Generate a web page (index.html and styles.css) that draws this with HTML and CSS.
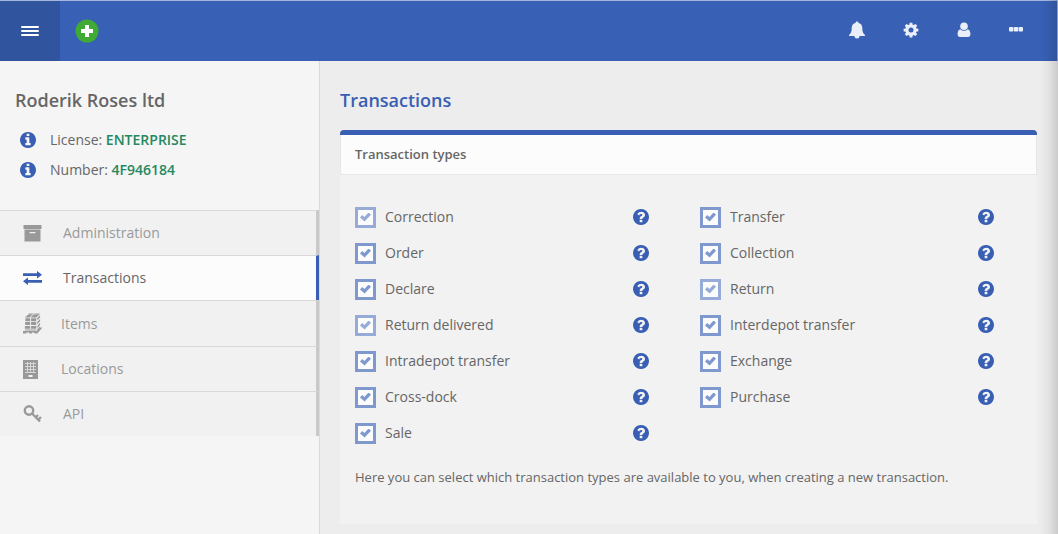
FILE: index.html
```html
<!DOCTYPE html>
<html lang="en">
<head>
<meta charset="utf-8">
<meta name="viewport" content="width=device-width, initial-scale=1">
<title>Transactions</title>
<link rel="stylesheet" href="styles.css">
</head>
<body>
<svg class="sprite" aria-hidden="true">
  <symbol id="help" viewBox="128 128 1536 1536"><path d="M1024 1376v-192q0-14-9-23t-23-9h-192q-14 0-23 9t-9 23v192q0 14 9 23t23 9h192q14 0 23-9t9-23zm256-672q0-88-55.5-163t-138.500-116-170-41q-243 0-371 213-15 24 8 42l132 100q7 6 19 6 16 0 25-12 53-68 86-92 34-24 86-24 48 0 85.500 26t37.500 59q0 38-20 61t-68 45q-63 28-115.500 86.500t-52.500 125.500v36q0 14 9 23t23 9h192q14 0 23-9t9-23q0-19 21.500-49.500t54.500-49.500q32-18 49-28.500t46-35 44.500-48 28-60.500 12.500-81zm384 192q0 209-103 385.500t-279.500 279.500-385.500 103-385.500-103-279.500-279.500-103-385.500 103-385.500 279.500-279.500 385.500-103 385.500 103 279.500 279.500 103 385.500z"/></symbol>
  <symbol id="info" viewBox="128 128 1536 1536"><path d="M1152 1376v-160q0-14-9-23t-23-9h-96v-512q0-14-9-23t-23-9h-320q-14 0-23 9t-9 23v160q0 14 9 23t23 9h96v320h-96q-14 0-23 9t-9 23v160q0 14 9 23t23 9h448q14 0 23-9t9-23zm-128-896v-160q0-14-9-23t-23-9h-192q-14 0-23 9t-9 23v160q0 14 9 23t23 9h192q14 0 23-9t9-23zm640 416q0 209-103 385.500t-279.500 279.500-385.500 103-385.500-103-279.500-279.500-103-385.500 103-385.500 279.500-279.500 385.500-103 385.500 103 279.500 279.500 103 385.500z"/></symbol>
</svg>

<header class="topbar">
  <button class="menu-button" aria-label="Menu"><svg width="18" height="12" viewBox="0 0 18 12"><path d="M1 2h16M1 6h16M1 10h16" stroke="#fff" stroke-width="2" stroke-linecap="round"/></svg></button>
  <button class="add-button" aria-label="Add"><svg width="24" height="24" viewBox="0 0 24 24"><circle cx="12" cy="12" r="11.500" fill="#3fab35"/><path d="M12 6v12M6 12h12" stroke="#fff" stroke-width="4"/></svg></button>
  <nav class="tools" aria-label="Tools">
    <button class="tool" aria-label="Notifications"><svg width="16" height="18" viewBox="0 0 16 18"><path d="M8 .5c.8 0 1.300.5 1.300 1.200 2.500.6 4 2.600 4 5.300 0 3.700.8 5.300 2.700 7v1H10.500a2.500 2.500 0 0 1-5 0H0v-1c1.900-1.700 2.700-3.300 2.700-7 0-2.700 1.500-4.700 4-5.300C6.700 1 7.200.5 8 .5z"/></svg></button>
    <button class="tool" aria-label="Settings"><svg width="16" height="16" viewBox="0 0 16 16"><path fill-rule="evenodd" d="M6.700.7h2.600l.4 2 .9.4 1.800-1.200 1.800 1.800L13 5.500l.4.900 2 .3v2.600l-2 .4-.4.900 1.200 1.700-1.800 1.800-1.800-1.100-.9.400-.4 2H6.700l-.4-2-.9-.4-1.800 1.100-1.800-1.800L3 10.600l-.4-.9-2-.4V6.700l2-.3.400-.9-1.200-1.800 1.800-1.800 1.800 1.200.9-.4zM8 5.500a2.500 2.500 0 1 0 0 5 2.500 2.500 0 0 0 0-5z"/></svg></button>
    <button class="tool" aria-label="Account"><svg width="14" height="16" viewBox="0 0 14 16"><path d="M3.300 7.200C1 7.700.6 10 .6 12.300.6 14 1.500 15 3 15h8c1.500 0 2.400-1 2.400-2.700 0-2.300-.4-4.600-2.700-5.100A5 5 0 0 1 7 8.700a5 5 0 0 1-3.700-1.500z"/><circle cx="7" cy="4.300" r="3.800"/></svg></button>
    <button class="tool" aria-label="More"><svg width="14" height="6" viewBox="0 0 14 6"><rect width="4.400" height="4.400" rx="1"/><rect x="4.800" width="4.400" height="4.400" rx="1"/><rect x="9.600" width="4.400" height="4.400" rx="1"/></svg></button>
  </nav>
</header>

<div class="layout">
  <aside class="sidebar">
    <section class="company">
      <h2 class="company-name">Roderik Roses ltd</h2>
      <p class="fact"><svg class="round-icon"><use href="#info"/></svg><span>License: <strong>ENTERPRISE</strong></span></p>
      <p class="fact"><svg class="round-icon"><use href="#info"/></svg><span>Number: <strong>4F946184</strong></span></p>
    </section>
    <nav class="side-nav" aria-label="Main">
      <a class="nav-item" href="#"><svg width="18" height="17" viewBox="0 0 18 17"><path fill-rule="evenodd" d="M0 0h18v4H0zM1 4.500h16v12H1zM6.500 7a.6.6 0 0 0 0 1.200h5a.6.6 0 0 0 0-1.200z"/></svg>Administration</a>
      <a class="nav-item active" href="#"><svg width="19" height="14" viewBox="0 0 19 14"><path d="M0 2.300h14V0l5 3.700-5 3.700V5H0zM19 9H5V6.600L0 10.300 5 14v-2.300h14z"/></svg>Transactions</a>
      <a class="nav-item compact tall" href="#"><svg width="20" height="21" viewBox="0 0 20 21"><path d="M2 4.200L5.500 1H10L7 4.200zM8 4.200L11 1h6.500L14 4.200zM6 0h5v.8H6zM12 0h5.500v.8H12zM2.500 5H7.500v3h-5zM8.500 5H14v3H8.500zM2.300 9H7.500v3H2.300zM8.500 9H14v3H8.500zM2 13H7.500v3H2zM8.500 13H14v3H8.500zM2 16.800h12v1H2zM15 5l3-3.200v2.400l-3 3zM15 9l3-3.200v2.400l-3 3zM15 13l3-3.200v2.400l-3 3zM15 16.500l3-3v1.500l-3 3zM0 18.300h14.500L19.500 14v2L15 21h-3v-1H9.500v1H6.500v-1H3.500v1H0z"/></svg>Items</a>
      <a class="nav-item compact" href="#"><svg width="15" height="19" viewBox="0 0 15 19" preserveAspectRatio="xMinYMid"><path fill-rule="evenodd" d="M0 0h15v19H0zm5.500 15v2h4v-2z"/><path stroke="#d6d6d6" stroke-width="1" fill="none" d="M2 3.500h11M2 6.500h11M2 9.500h11M2 12.500h11M4.500 2v11M7.500 2v11M10.500 2v11"/></svg>Locations</a>
      <a class="nav-item" href="#"><svg width="18" height="18" viewBox="0 0 18 18"><g fill="none" stroke="currentColor" stroke-width="2.400"><circle cx="5.500" cy="5.500" r="4.200"/><path d="M8.500 8.500l8 8M12 12.500l2.500-2.500M14.500 15l3-3"/></g></svg>API</a>
    </nav>
  </aside>

  <main class="content">
    <h1 class="page-title">Transactions</h1>
    <section class="panel">
      <h2 class="panel-title">Transaction types</h2>
      <div class="types">
        <div class="type"><label><input class="check soft" type="checkbox" checked>Correction</label><button class="help" aria-label="About Correction"><svg class="round-icon"><use href="#help"/></svg></button></div>
        <div class="type"><label><input class="check" type="checkbox" checked>Transfer</label><button class="help" aria-label="About Transfer"><svg class="round-icon"><use href="#help"/></svg></button></div>
        <div class="type"><label><input class="check" type="checkbox" checked>Order</label><button class="help" aria-label="About Order"><svg class="round-icon"><use href="#help"/></svg></button></div>
        <div class="type"><label><input class="check" type="checkbox" checked>Collection</label><button class="help" aria-label="About Collection"><svg class="round-icon"><use href="#help"/></svg></button></div>
        <div class="type"><label><input class="check" type="checkbox" checked>Declare</label><button class="help" aria-label="About Declare"><svg class="round-icon"><use href="#help"/></svg></button></div>
        <div class="type"><label><input class="check soft" type="checkbox" checked>Return</label><button class="help" aria-label="About Return"><svg class="round-icon"><use href="#help"/></svg></button></div>
        <div class="type"><label><input class="check soft" type="checkbox" checked>Return delivered</label><button class="help" aria-label="About Return delivered"><svg class="round-icon"><use href="#help"/></svg></button></div>
        <div class="type"><label><input class="check" type="checkbox" checked>Interdepot transfer</label><button class="help" aria-label="About Interdepot transfer"><svg class="round-icon"><use href="#help"/></svg></button></div>
        <div class="type"><label><input class="check" type="checkbox" checked>Intradepot transfer</label><button class="help" aria-label="About Intradepot transfer"><svg class="round-icon"><use href="#help"/></svg></button></div>
        <div class="type"><label><input class="check" type="checkbox" checked>Exchange</label><button class="help" aria-label="About Exchange"><svg class="round-icon"><use href="#help"/></svg></button></div>
        <div class="type"><label><input class="check" type="checkbox" checked>Cross-dock</label><button class="help" aria-label="About Cross-dock"><svg class="round-icon"><use href="#help"/></svg></button></div>
        <div class="type"><label><input class="check" type="checkbox" checked>Purchase</label><button class="help" aria-label="About Purchase"><svg class="round-icon"><use href="#help"/></svg></button></div>
        <div class="type"><label><input class="check" type="checkbox" checked>Sale</label><button class="help" aria-label="About Sale"><svg class="round-icon"><use href="#help"/></svg></button></div>
      </div>
      <p class="note">Here you can select which transaction types are available to you, when creating a new transaction.</p>
    </section>
  </main>
</div>
</body>
</html>
```
FILE: styles.css
```css
* { box-sizing: border-box; }

body {
  margin: 0;
  min-height: 100vh;
  display: flex;
  flex-direction: column;
  background: #ededed;
  color: #666;
  font: 14px/20px "Open Sans", "Noto Sans", sans-serif;
}

/* soft shade along the right window edge */
body::after {
  content: "";
  position: fixed;
  inset: 0 0 0 auto;
  width: 18px;
  background: linear-gradient(to right, rgba(0, 0, 0, 0), rgba(0, 0, 0, .04) 45%, rgba(0, 0, 0, .14));
  pointer-events: none;
}

h1, h2, p { margin: 0; }

button {
  display: flex;
  align-items: center;
  justify-content: center;
  padding: 0;
  border: 0;
  background: none;
  cursor: pointer;
}

svg { display: block; flex: none; fill: currentColor; }

.sprite { position: absolute; width: 0; height: 0; }

.round-icon { width: 16px; height: 16px; color: #385fb3; }

.topbar {
  display: flex;
  height: 61px;
  border-top: 1px solid #a4b6dc;
  border-right: 1px solid #a4b6dc;
  background: #3860b5;
}

.menu-button { width: 60px; background: #30549d; }

.add-button { width: 53px; }

.tools {
  display: flex;
  align-items: center;
  gap: 38px;
  margin-left: auto;
  padding: 0 34px 3px 0;
}

.tool { color: #e9eef8; }

.layout { display: flex; flex: 1; }

.sidebar {
  width: 320px;
  flex: none;
  border-right: 1px solid #dadada;
  background: #f5f5f5;
}

.company { padding: 27px 15px 25px; }

.company-name {
  margin-bottom: 12px;
  font-size: 18px;
  font-weight: 600;
  line-height: 25px;
}

.fact {
  display: flex;
  align-items: center;
  gap: 14px;
  height: 30px;
  padding-left: 5px;
}

.fact strong { color: #25885e; font-weight: 600; }

.nav-item {
  display: flex;
  align-items: center;
  gap: 21px;
  height: 45px;
  padding-left: 23px;
  border-top: 1px solid #d8d8d8;
  border-right: 3px solid #c9c9c9;
  background: #f1f1f1;
  color: #999;
  text-decoration: none;
}

.nav-item svg { width: 19px; }

.nav-item.compact { gap: 19px; }

.nav-item.tall { height: 46px; }

.nav-item.active {
  border-right-color: #385fb3;
  background: #fcfcfc;
  color: #666;
}

.nav-item.active svg { color: #385fb3; }

.content { flex: 1; min-width: 0; padding: 27px 21px 10px 20px; }

.page-title {
  margin-bottom: 17px;
  color: #385fb3;
  font-size: 18px;
  font-weight: 600;
  line-height: 25px;
}

.panel {
  border-top: 5px solid #385fb3;
  border-radius: 4px 4px 0 0;
  background: #f2f2f2;
}

.panel-title {
  padding: 10px 14px;
  border: 1px solid #e7e7e7;
  border-top: 0;
  background: #fcfcfc;
  font-size: 13px;
  font-weight: 600;
  line-height: 19px;
}

.types {
  display: grid;
  grid-template-columns: 1fr 1fr;
  column-gap: 51px;
  padding: 24px 43px 16px 15px;
}

.type {
  display: flex;
  align-items: center;
  justify-content: space-between;
  height: 36px;
}

.type label { display: flex; align-items: center; gap: 9px; }

.check {
  appearance: none;
  display: grid;
  place-items: center;
  width: 21px;
  height: 21px;
  margin: 0;
  border: 3px solid #7f99cf;
  background: #fcfcfc;
}

.check.soft { border-color: #97abd8; }

.check:checked::before {
  content: "";
  width: 11px;
  height: 9px;
  background: #7f99cf;
  clip-path: polygon(0 55%, 20% 28%, 40% 50%, 78% 0, 100% 24%, 42% 100%);
}

.check.soft:checked::before { background: #97abd8; }

.note { padding: 0 15px 37px; font-size: 13px; }
```
